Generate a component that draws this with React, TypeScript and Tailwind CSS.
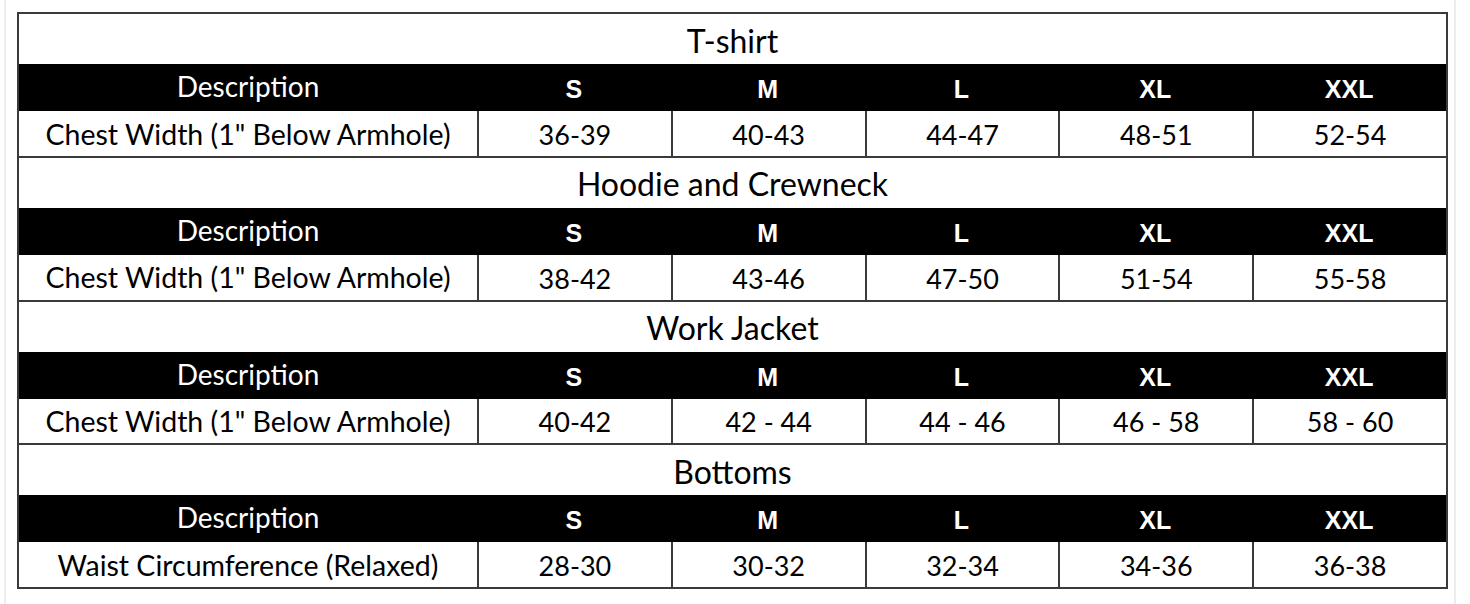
import React from "react";

type Section = { title: string; desc: string; values: string[] };

const sections: Section[] = [
  { title: "T-shirt", desc: "Chest Width (1\" Below Armhole)", values: ["36-39", "40-43", "44-47", "48-51", "52-54"] },
  { title: "Hoodie and Crewneck", desc: "Chest Width (1\" Below Armhole)", values: ["38-42", "43-46", "47-50", "51-54", "55-58"] },
  { title: "Work Jacket", desc: "Chest Width (1\" Below Armhole)", values: ["40-42", "42 - 44", "44 - 46", "46 - 58", "58 - 60"] },
  { title: "Bottoms", desc: "Waist Circumference (Relaxed)", values: ["28-30", "30-32", "32-34", "34-36", "36-38"] },
];

const sizes = ["S", "M", "L", "XL", "XXL"];

const cal = { fontFamily: "Lato, 'Open Sans', sans-serif" } as const;
const arial = { fontFamily: "'Liberation Sans', Arial, sans-serif" } as const;

export default function App() {
  return (
    <div className="w-[1470px] h-[604px] bg-white">
      <div className="ml-[4px] w-[1452px] h-[604px] border-x-2 border-[#ededed] pt-[12px] pl-[11px]">
        <div className="w-[1431px] border-2 border-[#3a3a3a] text-black">
          {sections.map((s, i) => (
            <div key={s.title} className={i < sections.length - 1 ? "border-b-2 border-[#3a3a3a]" : ""}>
              <div className="h-[50px] flex items-center justify-center text-[32px] leading-none pt-[3px]" style={cal}>
                {s.title}
              </div>
              <div className="h-[47px] bg-black text-white grid grid-cols-[458px_repeat(5,1fr)] items-center">
                <div className="text-center text-[28px] leading-none pb-[3px]" style={cal}>Description</div>
                {sizes.map((z) => (
                  <div key={z} className="text-center text-[25px] font-bold leading-none pt-[4px]" style={arial}>
                    {z}
                  </div>
                ))}
              </div>
              <div className="h-[44.75px] grid grid-cols-[458px_repeat(5,1fr)]">
                <div className="flex items-center justify-center text-[28.5px] leading-none pt-[1px]" style={cal}>
                  {s.desc}
                </div>
                {s.values.map((v, j) => (
                  <div
                    key={j}
                    className="flex items-center justify-center text-[27px] leading-none border-l-2 border-[#3a3a3a] pt-[2px]"
                    style={cal}
                  >
                    {v}
                  </div>
                ))}
              </div>
            </div>
          ))}
        </div>
      </div>
    </div>
  );
}
